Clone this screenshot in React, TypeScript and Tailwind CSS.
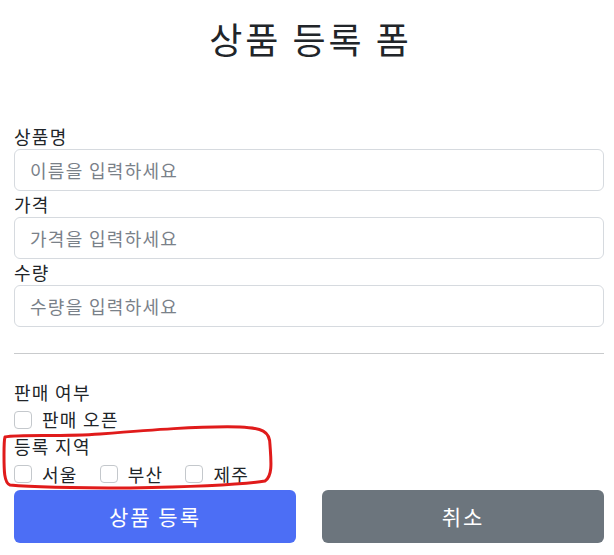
import { useState } from "react";

const fields = [
  { id: "itemName", label: "상품명", placeholder: "이름을 입력하세요" },
  { id: "price", label: "가격", placeholder: "가격을 입력하세요" },
  { id: "quantity", label: "수량", placeholder: "수량을 입력하세요" },
];

const regions = [
  { id: "SEOUL", label: "서울" },
  { id: "BUSAN", label: "부산" },
  { id: "JEJU", label: "제주" },
];

const Check = ({ id, label, className = "" }: { id: string; label: string; className?: string }) => {
  const [checked, setChecked] = useState(false);
  return (
    <div className={`flex items-center ${className}`}>
      <input
        id={id}
        type="checkbox"
        checked={checked}
        onChange={() => setChecked(!checked)}
        className="appearance-none w-[18px] h-[18px] border border-[#c4c8cc] rounded-[4px] bg-white checked:bg-[#4c6ef5] checked:border-[#4c6ef5]"
      />
      <label htmlFor={id} className="ml-[10px]">
        {label}
      </label>
    </div>
  );
};

export default function App() {
  return (
    <div
      className="relative w-full h-[555px] overflow-hidden bg-white text-[#212529] tracking-[1.3px]"
      style={{ fontFamily: '"Noto Sans CJK KR", "Noto Sans", sans-serif' }}
    >
      <div className="pl-[14px] pr-[10px]">
        {/* Title */}
        <h2 className="pt-[17px] pl-[3px] text-center text-[36px] leading-[43px] font-normal tracking-[3px]">
          상품 등록 폼
        </h2>

        <form className="mt-[63px] text-[18px]">
          {fields.map((f) => (
            <div key={f.id}>
              <label htmlFor={f.id} className="block h-[26px] leading-[26px]">
                {f.label}
              </label>
              <input
                id={f.id}
                type="text"
                placeholder={f.placeholder}
                className="block w-full h-[42px] px-[15px] border border-[#d6dadf] rounded-[6px] text-[18px] tracking-[1.3px] placeholder:text-[#7a8189] outline-none"
              />
            </div>
          ))}

          <hr className="mt-[26px] border-t border-[#c9cbcd]" />

          {/* Sale status */}
          <div className="mt-[25px] h-[27px] leading-[27px]">판매 여부</div>
          <Check id="open" label="판매 오픈" className="h-[27px]" />

          {/* Regions */}
          <div className="h-[27px] leading-[27px]">등록 지역</div>
          <div className="flex h-[28px] items-center">
            {regions.map((r) => (
              <Check key={r.id} id={r.id} label={r.label} className="mr-[22px]" />
            ))}
          </div>

          {/* Buttons */}
          <div className="mt-[2px] grid grid-cols-2 gap-[26px]">
            <button
              type="submit"
              className="h-[53px] rounded-[6px] bg-[#4c6ef5] text-white text-[21px] tracking-[2px]"
            >
              상품 등록
            </button>
            <button
              type="button"
              className="h-[53px] rounded-[6px] bg-[#6c757d] text-white text-[21px] tracking-[2px]"
            >
              취소
            </button>
          </div>
        </form>
      </div>

      {/* hand-drawn highlight */}
      <svg
        className="absolute left-0 top-0 pointer-events-none"
        width="614"
        height="555"
        viewBox="0 0 614 555"
        fill="none"
      >
        <path
          d="M5 437 C 20 434 60 437 100 434 C 150 430 200 426 240 427 C 262 428 270 431 270 445 C 271 460 273 476 265 481 C 240 485 180 487 130 488 C 80 488 30 487 10 485 C 4 483 4 470 4 455 C 4 445 4 440 5 437 Z"
          stroke="#e01b1b"
          strokeWidth="3"
          strokeLinejoin="round"
        />
      </svg>
    </div>
  );
}
